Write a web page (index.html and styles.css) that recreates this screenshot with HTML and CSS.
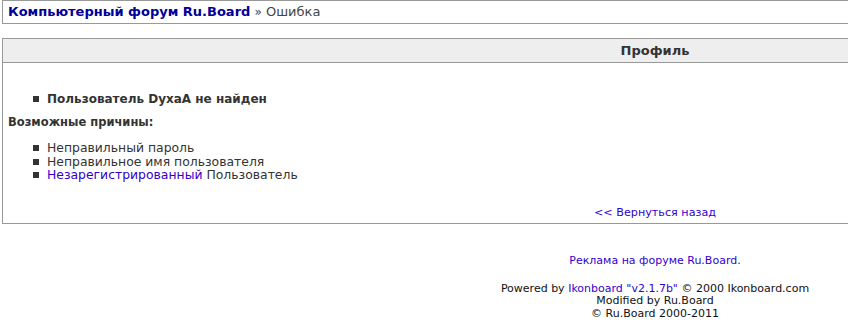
FILE: index.html
```html
<!DOCTYPE html>
<html lang="ru">
<head>
    <meta charset="UTF-8">
    <title>Ошибка - Компьютерный форум Ru.Board</title>
    <link rel="stylesheet" href="styles.css">
</head>
<body>
  <!-- Навигация -->
  <div class="nav">
    <a class="forum" href="#">Компьютерный форум Ru.Board</a> <span class="sep">&raquo;</span> Ошибка
  </div>

  <!-- Ошибка профиля -->
  <div class="box">
    <div class="box-title">Профиль</div>
    <div class="box-body">
      <ul class="error">
        <li>Пользователь DyxaA не найден</li>
      </ul>
      <div class="reasons-title">Возможные причины:</div>
      <ul class="reasons">
        <li>Неправильный пароль</li>
        <li>Неправильное имя пользователя</li>
        <li><a href="#">Незарегистрированный</a> Пользователь</li>
      </ul>
      <div class="back"><a href="#">&lt;&lt; Вернуться назад</a></div>
    </div>
  </div>

  <!-- Подвал -->
  <div class="footer">
    <div class="ads"><a href="#">Реклама на форуме Ru.Board.</a></div>
    <div class="copy">
      Powered by <a href="#">Ikonboard "v2.1.7b"</a> &copy; 2000 Ikonboard.com<br>
      Modified by Ru.Board<br>
      &copy; Ru.Board 2000-2011
    </div>
  </div>
</body>
</html>
```

FILE: styles.css
```css
html { overflow: hidden; }
body { margin: 0 2px; width: 1306px; background-color: #fff; font-family: "DejaVu Sans", Verdana, sans-serif; color: #333; }
a { color: #3300cc; text-decoration: none; }
.nav { border: 1px solid #999; height: 22px; line-height: 22px; padding: 0 5px; font-size: 13px; color: #444; }
.nav .forum { color: #000099; font-weight: bold; }
.nav .sep { color: #444; font-size: 12px; }
.box { margin-top: 14px; border: 1px solid #999; }
.box-title { background-color: #eee; border-bottom: 1px solid #999; height: 23px; line-height: 23px; text-align: center; font-size: 13px; font-weight: bold; color: #333; }
.box-body { padding: 0 5px; }
ul { list-style: none; margin: 0; padding-left: 39px; }
li::before { content: ""; display: inline-block; width: 6px; height: 6px; background-color: #333; margin-left: -14px; margin-right: 8px; vertical-align: 1px; }
.error { margin-top: 29px; font-size: 12px; font-weight: bold; line-height: 15px; }
.reasons-title { margin-top: 8px; font-size: 11.5px; font-weight: bold; line-height: 15px; }
.reasons { margin-top: 11px; font-size: 12.4px; line-height: 13.5px; color: #333; }
.back { margin-top: 24px; height: 17px; text-align: center; font-size: 11.2px; line-height: 14px; }
.footer { text-align: center; font-size: 11px; color: #111; }
.ads { margin-top: 30px; line-height: 14px; }
.copy { margin-top: 15px; line-height: 12.7px; }
```
